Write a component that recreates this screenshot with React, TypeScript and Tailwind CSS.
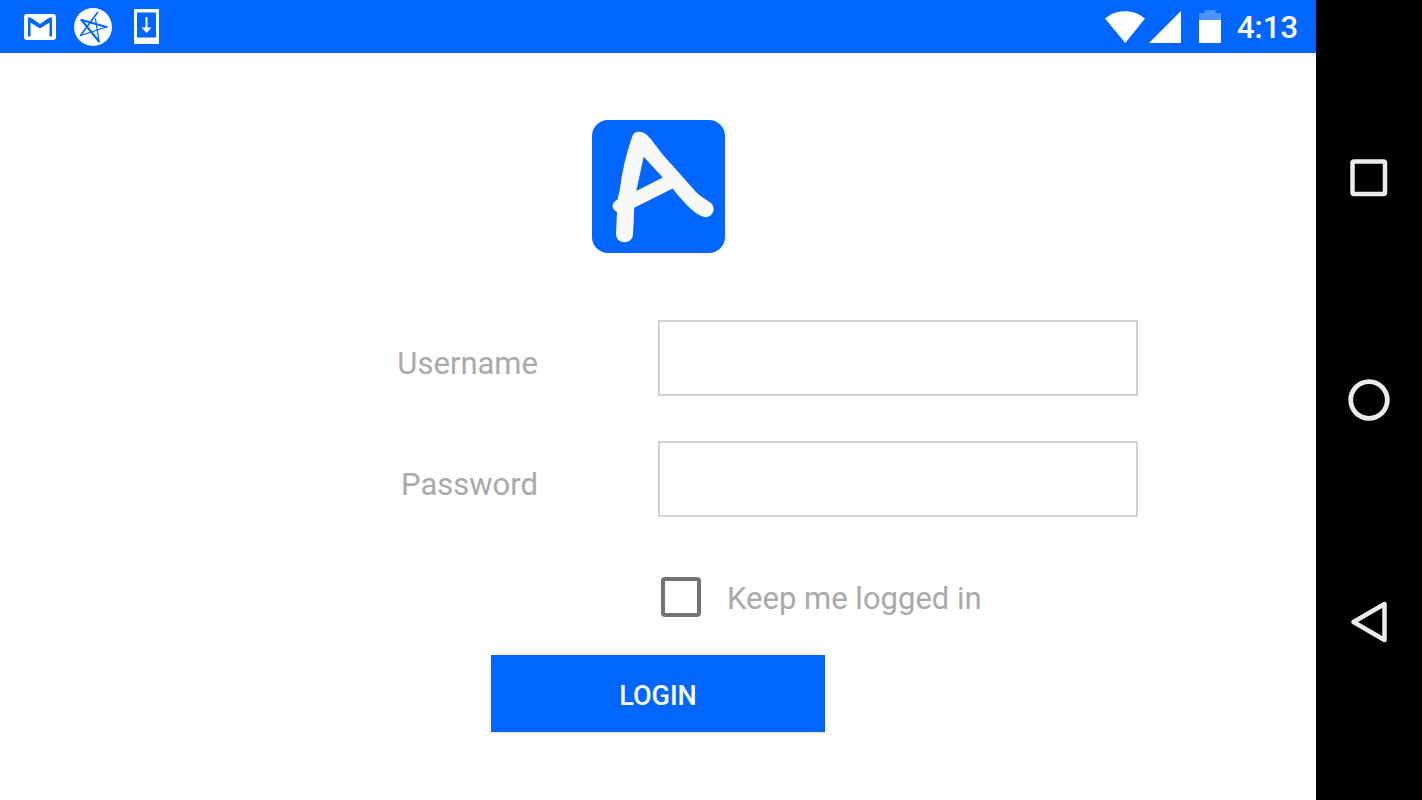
// src/App.tsx
import { FC, useState, FormEvent } from "react";

const StatusBar: FC = () => {
  return (
    <header className="flex h-[53px] items-center justify-between bg-[#0066ff] pr-[18px] pl-6">
      {/* notifications */}
      <div className="flex items-center">
        <svg width="32" height="26" viewBox="0 0 32 26" aria-label="Mail">
          <rect width="32" height="26" rx="3" fill="#fff" />
          <path
            fill="#0066ff"
            d="M4 3.500H6.500L16 10L25.500 3.500H28V22.500H25.500V8.500L16 14.500L6.500 8.500V22.500H4Z"
          />
        </svg>
        <svg
          className="ml-[18px]"
          width="38"
          height="38"
          viewBox="0 0 38 38"
          aria-label="Star"
        >
          <circle cx="19" cy="19" r="19" fill="#fff" />
          <g fill="none" stroke="#0066ff" strokeLinecap="round">
            <path d="M23.500 4.500L6.500 27.500" strokeWidth="1.600" />
            <path d="M6.500 27.500L32.500 19" strokeWidth="1.300" />
            <path d="M32.500 19L7.500 12" strokeWidth="2.200" />
            <path d="M7.500 12L25 33.500" strokeWidth="2" />
            <path d="M25 33.500L21.500 11" strokeWidth="1.300" />
          </g>
        </svg>
        <svg
          className="ml-[22px]"
          width="25"
          height="36"
          viewBox="0 0 25 36"
          aria-label="Download"
        >
          <path
            fill="#fff"
            fillRule="evenodd"
            d="M0 0H25V35H0ZM3 3.500V28.500H22V3.500Z"
          />
          <path
            fill="#fff"
            d="M11.500 8H13.500V18.500H17.500L12.500 24L7.500 18.500H11.500Z"
          />
        </svg>
      </div>

      {/* network, battery, clock */}
      <div className="flex items-center text-white">
        <svg width="40" height="32" viewBox="0 0 40 32" aria-label="Wi-Fi">
          <path fill="#fff" d="M0 7.500C11 -2.300 29 -2.300 40 7.500L20.300 32Z" />
        </svg>
        <svg
          className="ml-1"
          width="32"
          height="32"
          viewBox="0 0 32 32"
          aria-label="Signal"
        >
          <path fill="#fff" d="M32 0V32H0Z" />
        </svg>
        <svg
          className="ml-[18px]"
          width="22"
          height="33"
          viewBox="0 0 22 33"
          aria-label="Battery"
        >
          <path fill="#4d94ff" d="M5.500 0H16.500V3H22V10H0V3H5.500Z" />
          <path fill="#fff" d="M0 10H22V33H0Z" />
        </svg>
        <time className="ml-4 pt-[3px] text-[31px] leading-[48px] font-medium">
          4:13
        </time>
      </div>
    </header>
  );
};

const Logo: FC = () => {
  return (
    <svg width="133" height="133" viewBox="0 0 133 133" aria-label="Logo">
      <rect width="133" height="133" rx="16" fill="#0066ff" />
      <path
        fill="#f8f8f8"
        fillRule="evenodd"
        d="M40 17C41.500 11 49 10 55 15C60 20 65 27 71 35L89 55L104 72C109 76.500 114 79.500 119 83C124 88 122 96 114 97.300C109 96.500 105 94 100.700 90.500C93 84 87 76.500 80.700 68.500L42.300 87.700L41 114C41 125 24 125 24 114L25 92C19 89 19 83 25.500 79.500L27.700 70C30 52 34 34 40 17ZM51.700 36.700L44.300 71L70.700 57.500Z"
      />
    </svg>
  );
};

const NavigationBar: FC = () => {
  return (
    <nav className="flex w-[106px] shrink-0 flex-col items-center justify-center gap-[178px] bg-black">
      <button type="button" aria-label="Recent apps">
        <svg width="44" height="44" viewBox="0 0 44 44" fill="none">
          <rect
            x="5.500"
            y="5.500"
            width="32.500"
            height="32.500"
            rx="1.500"
            stroke="#ebebeb"
            strokeWidth="4.500"
          />
        </svg>
      </button>
      <button type="button" aria-label="Home">
        <svg width="44" height="44" viewBox="0 0 44 44" fill="none">
          <circle cx="22" cy="22" r="18.300" stroke="#ebebeb" strokeWidth="4.800" />
        </svg>
      </button>
      <button type="button" aria-label="Back">
        <svg width="44" height="44" viewBox="0 0 44 44" fill="none">
          <path
            d="M37.500 4V40L6.500 22Z"
            stroke="#ebebeb"
            strokeWidth="4.500"
            strokeLinejoin="round"
          />
        </svg>
      </button>
    </nav>
  );
};

const App: FC = () => {
  const [username, setUsername] = useState<string>("");
  const [password, setPassword] = useState<string>("");
  const [keepLogin, setKeepLogin] = useState<boolean>(false);

  const handleSubmit = (e: FormEvent<HTMLFormElement>) => {
    e.preventDefault();
  };

  return (
    <div className="flex min-h-screen bg-white font-[Roboto,sans-serif]">
      <div className="flex min-w-0 flex-1 flex-col">
        <StatusBar />
        <main className="flex flex-col items-center pt-[67px]">
          <Logo />
          <form
            onSubmit={handleSubmit}
            className="mt-[67px] flex w-full max-w-[960px] flex-col items-center text-[31px] text-[#a9a9a9]"
          >
            <div className="grid w-full grid-cols-2 gap-y-[45px]">
              <label
                htmlFor="username"
                className="self-center pt-3 pr-[120px] text-right leading-[40px]"
              >
                Username
              </label>
              <input
                id="username"
                type="text"
                value={username}
                onChange={(e) => setUsername(e.target.value)}
                className="h-[76px] w-full border-2 border-[#d2d2d2] px-4 outline-none"
              />
              <label
                htmlFor="password"
                className="self-center pt-3 pr-[120px] text-right leading-[40px]"
              >
                Password
              </label>
              <input
                id="password"
                type="password"
                value={password}
                onChange={(e) => setPassword(e.target.value)}
                className="h-[76px] w-full border-2 border-[#d2d2d2] px-4 outline-none"
              />
            </div>
            <div className="mt-[60px] grid w-full grid-cols-2">
              <div className="col-start-2 flex h-10 items-center pl-[3px]">
                <input
                  id="keepLogin"
                  type="checkbox"
                  checked={keepLogin}
                  onChange={(e) => setKeepLogin(e.target.checked)}
                  className="size-10 appearance-none rounded-[4px] border-4 border-[#737373] checked:bg-[#0066ff]"
                />
                <label htmlFor="keepLogin" className="pt-1 pl-[26px] leading-[40px]">
                  Keep me logged in
                </label>
              </div>
            </div>
            <button
              type="submit"
              className="mt-[38px] h-[77px] w-[334px] bg-[#0066ff] pt-[6px] text-[27px] font-medium text-white shadow-sm"
            >
              LOGIN
            </button>
          </form>
        </main>
      </div>
      <NavigationBar />
    </div>
  );
};

export default App;
